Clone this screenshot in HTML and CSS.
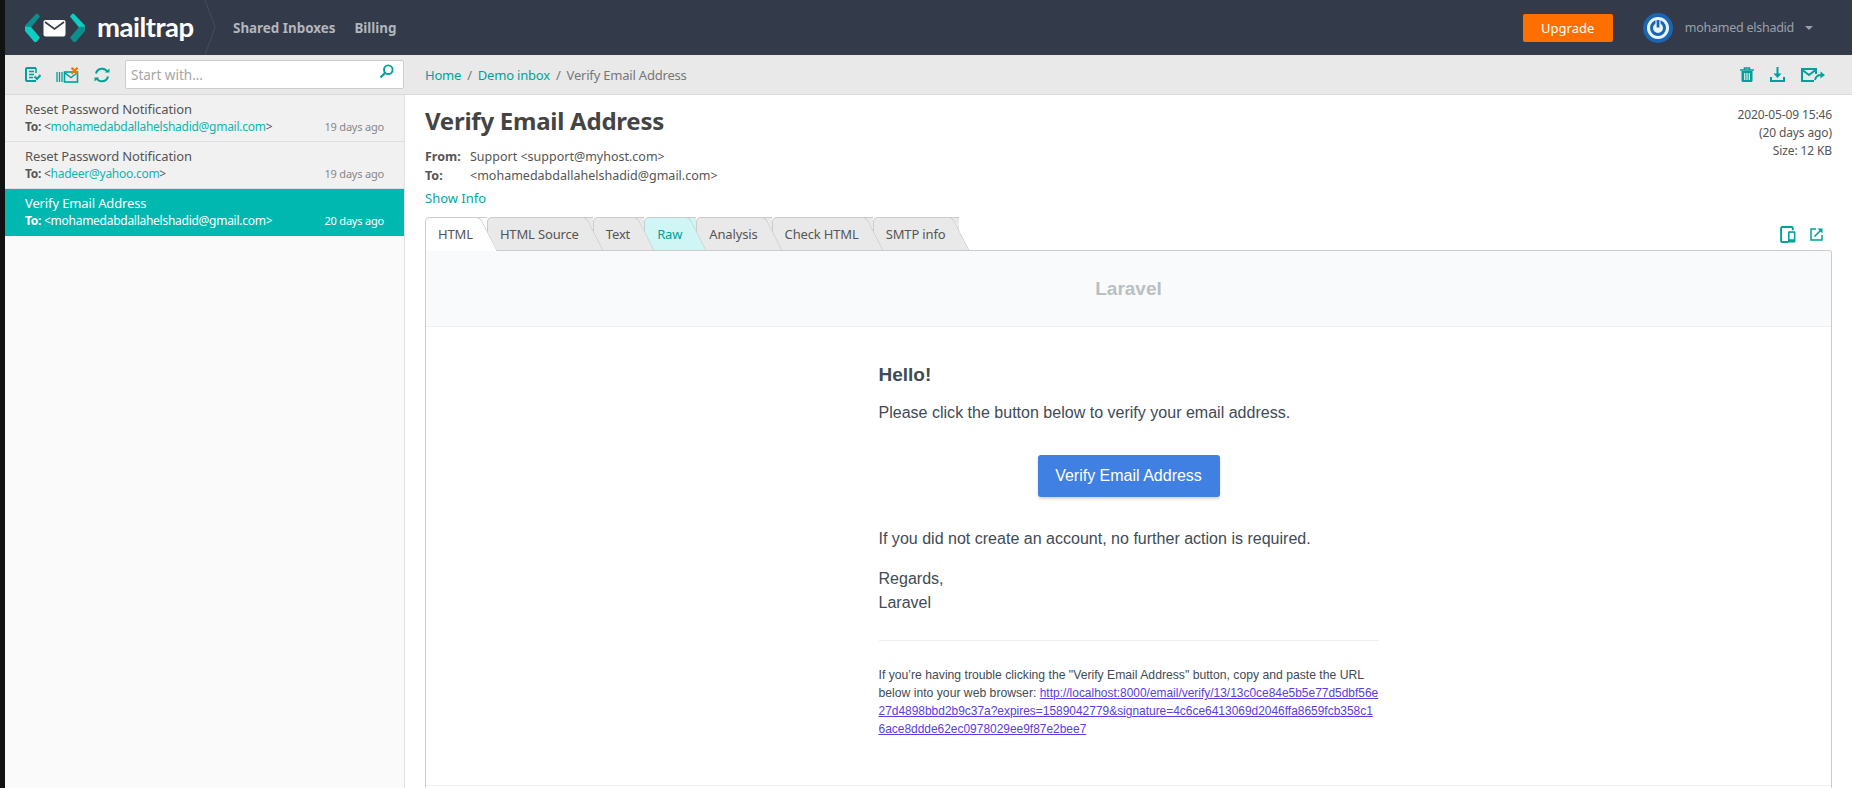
FILE: index.html
```html
<!DOCTYPE html>
<html lang="en">
<head>
<meta charset="utf-8">
<title>Mailtrap - Verify Email Address</title>
<link rel="stylesheet" href="styles.css">
</head>
<body>
<div class="app">
  <header class="topbar">
    <div class="brand">
      <svg class="logo" width="60" height="30" viewBox="0 0 60 30">
        <path d="M11 1 Q12 0 13 1 L15 3.500 L6 14.500 L0 14.500 L0 12.500Z" fill="#0b8e8e"/>
        <path d="M0 13.500 L6 14 L15 24.500 L12 28.500 Q10.500 30 9 28.500 L0 18Z" fill="#10cdc3"/>
        <path d="M49 1 Q48 0 47 1 L45 3.500 L54 14.500 L60 14.500 L60 12.500Z" fill="#10cdc3"/>
        <path d="M60 13.500 L54 14 L45 24.500 L48 28.500 Q49.500 30 51 28.500 L60 18Z" fill="#0b8e8e"/>
        <rect x="18.500" y="7" width="22" height="16.500" rx="2" fill="#fff"/>
        <path d="M20 9 L29.500 16 L39 9" fill="none" stroke="#333a49" stroke-width="1.600"/>
      </svg>
      <span class="wordmark">mailtrap</span>
      <svg class="brand-sep" width="14" height="55" viewBox="0 0 14 55"><path d="M1 0 L11 27 L1 55" fill="none" stroke="#464d5c" stroke-width="1"/></svg>
    </div>
    <nav class="topnav"><a>Shared Inboxes</a><a>Billing</a></nav>
    <div class="topright">
      <button class="upgrade">Upgrade</button>
      <svg class="avatar" width="30" height="30" viewBox="0 0 30 30">
        <circle cx="15" cy="15" r="15" fill="#1a66b3"/>
        <circle cx="15" cy="15" r="11" fill="#e8f4fb"/>
        <circle cx="15" cy="15" r="6.500" fill="none" stroke="#1a66b3" stroke-width="3"/>
        <path d="M15 6 V15" stroke="#e8f4fb" stroke-width="5"/>
        <path d="M15 7 V14.500" stroke="#1a66b3" stroke-width="2.800"/>
      </svg>
      <span class="username">mohamed elshadid</span>
      <span class="caret"></span>
    </div>
  </header>
  <div class="body">
    <aside class="side">
      <div class="toolbar side-tools">
        <svg class="ico ico-a" width="16" height="15" viewBox="0 0 16 15">
          <path d="M11 1 H2 Q1 1 1 2 V13 Q1 14 2 14 H11" fill="none" stroke="#00a19b" stroke-width="2"/>
          <path d="M11 1 V6 M4 4.500 H9 M4 7.500 H9 M4 10.500 H8" fill="none" stroke="#00a19b" stroke-width="1.500"/>
          <path d="M9.500 9.500 L12 12 L15.500 8" fill="none" stroke="#00a19b" stroke-width="2"/>
        </svg>
        <svg class="ico ico-b" width="23" height="16" viewBox="0 0 23 16">
          <path d="M1 5 V15 M3.500 5 V15 M6 5 V15" stroke="#00a19b" stroke-width="1.300"/>
          <rect x="8.500" y="5" width="13" height="10" fill="none" stroke="#00a19b" stroke-width="1.600"/>
          <path d="M9 6 L15 10.500 L21 6" fill="none" stroke="#00a19b" stroke-width="1.500"/>
          <path d="M15.500 .8 L21.500 6.800 M21.500 .8 L15.500 6.800" stroke="#ff6f00" stroke-width="2.200"/>
        </svg>
        <svg class="ico ico-c" width="16" height="16" viewBox="0 0 16 16">
          <path d="M2 6.500 A6.200 6.200 0 0 1 13.500 5" fill="none" stroke="#00a19b" stroke-width="2"/>
          <path d="M11 5.500 H15.500 V1.500Z" fill="#00a19b"/>
          <path d="M14 9.500 A6.200 6.200 0 0 1 2.500 11" fill="none" stroke="#00a19b" stroke-width="2"/>
          <path d="M5 10.500 H.5 V14.500Z" fill="#00a19b"/>
        </svg>
        <div class="search">
          <span class="placeholder">Start with...</span>
          <svg width="15" height="15" viewBox="0 0 15 15">
            <circle cx="9.300" cy="5.700" r="4.300" fill="none" stroke="#00a19b" stroke-width="1.900"/>
            <path d="M6 9 L1.500 13.500" stroke="#00a19b" stroke-width="2.200"/>
          </svg>
        </div>
      </div>
      <ul class="list">
        <li class="item">
          <div class="subject">Reset Password Notification</div>
          <div class="meta"><span class="to"><b>To:</b> &lt;<a>mohamedabdallahelshadid@gmail.com</a>&gt;</span><span class="when">19 days ago</span></div>
        </li>
        <li class="item">
          <div class="subject">Reset Password Notification</div>
          <div class="meta"><span class="to"><b>To:</b> &lt;<a>hadeer@yahoo.com</a>&gt;</span><span class="when">19 days ago</span></div>
        </li>
        <li class="item selected">
          <div class="subject">Verify Email Address</div>
          <div class="meta"><span class="to"><b>To:</b> &lt;<a>mohamedabdallahelshadid@gmail.com</a>&gt;</span><span class="when">20 days ago</span></div>
        </li>
      </ul>
    </aside>
    <main class="main">
      <div class="toolbar crumbs">
        <div class="trail"><a>Home</a><i>/</i><a>Demo inbox</a><i>/</i><span>Verify Email Address</span></div>
        <div class="actions">
          <svg width="14" height="15" viewBox="0 0 14 15">
            <path d="M0 3 H14 M4.500 3 V1 H9.500 V3" fill="none" stroke="#00a19b" stroke-width="1.600"/>
            <path d="M1.500 4 H12.500 V13.500 Q12.500 15 11 15 H3 Q1.500 15 1.500 13.500Z" fill="#00a19b"/>
            <path d="M4.700 6 V13 M7 6 V13 M9.300 6 V13" stroke="#e9e9e9" stroke-width="1.200"/>
          </svg>
          <svg width="15" height="15" viewBox="0 0 15 15">
            <path d="M7.500 0 V8" stroke="#00a19b" stroke-width="2"/>
            <path d="M3.500 6.500 H11.500 L7.500 11Z" fill="#00a19b"/>
            <path d="M1 10 V14 H14 V10" fill="none" stroke="#00a19b" stroke-width="2"/>
          </svg>
          <svg width="24" height="14" viewBox="0 0 24 14">
            <path d="M13 13 H1 V1 H15 V6" fill="none" stroke="#00a19b" stroke-width="2"/>
            <path d="M1.500 2 L8 7 L14.500 2" fill="none" stroke="#00a19b" stroke-width="2"/>
            <path d="M14 12 Q15 7 20 7" fill="none" stroke="#00a19b" stroke-width="1.800"/>
            <path d="M19.500 3.500 L24 7 L19.500 10.500Z" fill="#00a19b"/>
          </svg>
        </div>
      </div>
      <section class="message">
        <div class="msg-head">
          <div>
            <h1 class="msg-title">Verify Email Address</h1>
            <div class="addr"><b>From:</b><span>Support &lt;support@myhost.com&gt;</span></div>
            <div class="addr"><b>To:</b><span>&lt;mohamedabdallahelshadid@gmail.com&gt;</span></div>
            <a class="show-info">Show Info</a>
          </div>
          <div class="stamp">2020-05-09 15:46<br>(20 days ago)<br>Size: 12 KB</div>
        </div>
        <div class="tabrow">
          <div class="tabs">
            <span class="tab t1 active">HTML</span>
            <span class="tab t2">HTML Source</span>
            <span class="tab t3">Text</span>
            <span class="tab t4 raw">Raw</span>
            <span class="tab t5">Analysis</span>
            <span class="tab t6">Check HTML</span>
            <span class="tab t7">SMTP info</span>
          </div>
          <div class="tab-icons">
            <svg width="16" height="17" viewBox="0 0 15 16">
              <path d="M8 15 H2 Q1 15 1 14 V2 Q1 1 2 1 H11 Q12 1 12 2 V4" fill="none" stroke="#00a19b" stroke-width="1.800"/>
              <rect x="7.500" y="5" width="7" height="10.500" rx="1" fill="#00a19b"/>
              <rect x="9" y="6.500" width="4" height="6" fill="#fff"/>
            </svg>
            <svg width="13" height="13" viewBox="0 0 13 13">
              <path d="M6 1 H1 V12 H12 V7" fill="none" stroke="#00a19b" stroke-width="1.500"/>
              <path d="M4.500 8.500 L11 2" stroke="#00a19b" stroke-width="1.600"/>
              <path d="M7.500 .5 H12.500 V5.500Z" fill="#00a19b"/>
            </svg>
          </div>
        </div>
        <div class="frame">
          <div class="mail-head">Laravel</div>
          <div class="mail-body">
            <div class="mail-col">
              <h2 class="hello">Hello!</h2>
              <p class="para">Please click the button below to verify your email address.</p>
              <div class="cta-wrap"><a class="cta">Verify Email Address</a></div>
              <p class="para after-cta">If you did not create an account, no further action is required.</p>
              <p class="para regards">Regards,<br>Laravel</p>
              <div class="subcopy">If you’re having trouble clicking the "Verify Email Address" button, copy and paste the URL below into your web browser: <a>http://localhost:8000/email/verify/13/13c0ce84e5b5e77d5dbf56e27d4898bbd2b9c37a?expires=1589042779&amp;signature=4c6ce6413069d2046ffa8659fcb358c16ace8ddde62ec0978029ee9f87e2bee7</a></div>
            </div>
          </div>
        </div>
      </section>
    </main>
  </div>
</div>
</body>
</html>
```

FILE: styles.css
```css
* { box-sizing: border-box; }
html, body { margin: 0; height: 100%; }
body {
  height: 788px;
  overflow: hidden;
  background: #111213;
  padding-left: 5px;
  font-family: "Noto Sans", "Open Sans", sans-serif;
  font-size: 13px;
  color: #555;
}
a { color: #00a8a2; }
b { font-weight: 700; }
.app { height: 788px; display: flex; flex-direction: column; background: #fff; overflow: hidden; }

/* top bar */
.topbar { height: 55px; flex: none; background: #333a49; display: flex; align-items: center; }
.brand { display: flex; align-items: center; width: 228px; padding-left: 20px; position: relative; align-self: stretch; }
.logo { flex: none; }
.wordmark { margin-left: 12px; font-family: "Lato", sans-serif; font-weight: 700; font-size: 27.5px; letter-spacing: -.5px; color: #fff; line-height: 1; position: relative; top: -1px; }
.brand-sep { position: absolute; left: 199px; top: 0; }
.topnav { display: flex; gap: 19px; }
.topnav a { color: #b2b6bd; font-weight: 700; font-size: 13.4px; }
.topright { margin-left: auto; display: flex; align-items: center; padding-right: 39px; }
.upgrade { width: 90px; height: 28px; border: 0; border-radius: 2px; background: #ff6f00; color: #fff; font: 13px "Noto Sans", sans-serif; padding: 0; }
.avatar { margin-left: 30px; }
.username { margin-left: 12px; color: #9aa0aa; font-size: 12.5px; letter-spacing: -.25px; }
.caret { margin-left: 11px; border: 4px solid transparent; border-top-color: #9aa0aa; border-bottom: 0; width: 0; height: 0; }

/* layout */
.body { flex: 1; display: flex; min-height: 0; }
.toolbar { height: 40px; background: #e9e9e9; border-bottom: 1px solid #d9d9d9; display: flex; align-items: center; flex: none; }
.side { width: 400px; flex: none; display: flex; flex-direction: column; background: #fafafa; }
.side-tools { padding-left: 20px; }
.ico-b { margin-left: 15px; }
.ico-c { margin-left: 15px; }
.search { margin-left: 15px; width: 279px; height: 29px; background: #fff; border: 1px solid #ccc; border-radius: 2px; display: flex; align-items: center; justify-content: space-between; padding: 0 9px 0 5px; }
.search svg { position: relative; top: -3px; }
.placeholder { color: #a6a6a6; font-size: 13.5px; }

.list { list-style: none; margin: 0; padding: 0; flex: 1; border-right: 1px solid #e2e2e2; }
.item { height: 47px; padding: 5px 20px 0 20px; background: #f1f1f1; border-bottom: 1px solid #dedede; }
.subject { font-size: 13px; line-height: 18px; letter-spacing: -.13px; color: #555; }
.meta { display: flex; justify-content: space-between; align-items: baseline; font-size: 12px; line-height: 17px; letter-spacing: -.27px; color: #555; }
.to a { color: #10b5af; }
.when { font-size: 11px; letter-spacing: -.2px; color: #888; }
.item.selected { background: #00b8b0; border-bottom-color: #00b8b0; color: #fff; }
.selected .subject, .selected .meta, .selected .to a, .selected .when { color: #fff; }

/* main */
.main { flex: 1; min-width: 0; display: flex; flex-direction: column; }
.crumbs { padding: 0 20px 0 20px; justify-content: space-between; }
.trail { display: flex; font-size: 13px; letter-spacing: -.2px; color: #777; }
.trail a { color: #00a19b; }
.trail i { font-style: normal; margin: 0 6px; color: #777; }
.actions { display: flex; align-items: center; gap: 16px; padding-right: 7px; }
.message { flex: 1; min-height: 0; padding: 0 20px; }
.msg-head { display: flex; justify-content: space-between; height: 122px; }
.msg-title { margin: 9px 0 0; font-size: 24px; line-height: 34px; letter-spacing: -.25px; font-weight: 700; color: #444; }
.addr { display: flex; font-size: 12.5px; line-height: 19px; color: #555; }
.addr:first-of-type { margin-top: 9px; }
.addr b { width: 45px; flex: none; }
.show-info { display: block; margin-top: 4px; font-size: 13px; line-height: 19px; color: #00a8a2; }
.stamp { margin-top: 11px; text-align: right; font-size: 12px; line-height: 18px; letter-spacing: -.12px; color: #555; }

.tabrow { display: flex; justify-content: space-between; align-items: flex-end; height: 33px; }
.tabs { display: flex; align-items: flex-end; height: 33px; }
.tab { position: relative; height: 33px; line-height: 32px; font-size: 13px; letter-spacing: -.15px; color: #555; background: #e9e9e9; border: 1px solid #ccc; border-bottom: 0; border-right: 0; border-radius: 5px 0 0 0; padding: 0 14px 0 12px; }
.tab::after { content: ""; position: absolute; top: -1px; bottom: 0; right: -2px; width: 20px; background: inherit; border: 1px solid #ccc; border-left: 0; border-bottom: 0; border-radius: 0 5px 0 0; transform: skewX(27deg); z-index: -1; }
.t1 { z-index: 7; } .t2 { z-index: 6; } .t3 { z-index: 5; } .t4 { z-index: 4; }
.t5 { z-index: 3; } .t6 { z-index: 2; } .t7 { z-index: 1; }
.tab.active { background: #fff; height: 34px; margin-bottom: -1px; }
.tab.raw { background: #cff6f4; color: #00a19b; }
.tab-icons { display: flex; gap: 14px; align-items: center; align-self: flex-start; padding: 9px 9px 0 0; }

.frame { border: 1px solid #ccc; border-bottom: 0; border-radius: 0 3px 0 0; background: #fff; height: 539px; overflow: hidden; }
.mail-head { height: 76px; background: #f8fafc; border-bottom: 1px solid #edeff2; display: flex; align-items: center; justify-content: center; font: 700 19px "Liberation Sans", sans-serif; color: #bbbfc3; }
.mail-body { height: 459px; border-bottom: 1px solid #edeff2; display: flex; justify-content: center; font-family: "Liberation Sans", sans-serif; color: #414b56; }
.mail-col { width: 500px; padding-top: 36px; }
.hello { margin: 0; font-size: 19px; line-height: 24px; font-weight: 700; }
.para { margin: 13px 0 0; font-size: 16.04px; line-height: 24px; }
.cta-wrap { margin-top: 31px; display: flex; justify-content: center; }
.cta { display: block; width: 182px; height: 42px; background: #3f80e2; border-radius: 3px; box-shadow: 0 2px 3px rgba(0,0,0,.16); color: #fff; font-size: 16px; line-height: 41px; text-align: center; }
.para.after-cta { margin-top: 29px; }
.para.regards { margin-top: 16px; }
.subcopy { margin-top: 26px; padding-top: 25px; border-top: 1px solid #edeff2; font-size: 12.2px; line-height: 18px; color: #414b56; }
.subcopy a { color: #5b3de0; text-decoration: underline; word-break: break-all; font-size: 11.95px; }
```
